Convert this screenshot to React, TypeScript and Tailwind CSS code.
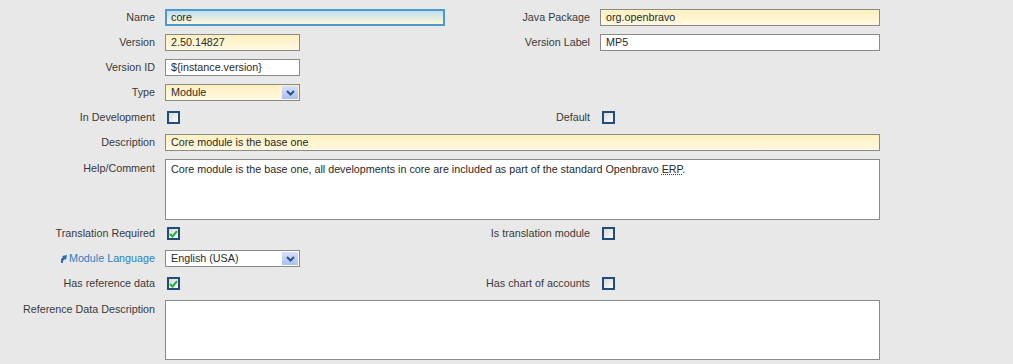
import React from "react";

const font = { fontFamily: '"Liberation Sans", Arial, sans-serif' };

function Label({ children, top = false }: { children: React.ReactNode; top?: boolean }) {
  return (
    <div
      className={
        "flex justify-end text-[10.75px] text-[#3a3a3a] whitespace-nowrap " +
        (top ? "items-start pt-[5px]" : "items-center")
      }
    >
      {children}
    </div>
  );
}

function TextInput({
  value,
  yellow = false,
  width,
}: {
  value: string;
  yellow?: boolean;
  width: string;
}) {
  return (
    <div className="flex items-center">
      <div
        className={
          "h-[17px] border border-[#8a8a8a] flex items-center pl-[5px] text-[10.75px] text-[#2a2a2a] " +
          width +
          (yellow ? " bg-gradient-to-b from-[#fff0bf] to-[#fff9e2]" : " bg-white")
        }
      >
        {value}
      </div>
    </div>
  );
}

function Select({ value, yellow = false }: { value: string; yellow?: boolean }) {
  return (
    <div className="flex items-center">
      <div
        className={
          "relative h-[17px] w-[135px] border border-[#8a8a8a] flex items-center pl-[5px] text-[10.75px] text-[#2a2a2a] " +
          (yellow ? "bg-gradient-to-b from-[#fff0bf] to-[#fff9e2]" : "bg-white")
        }
      >
        {value}
        <div className="absolute right-[1px] top-[1px] h-[13px] w-[16px] bg-gradient-to-b from-[#d6e2fa] to-[#a9c1ef] flex items-center justify-center">
          <svg width="9" height="6" viewBox="0 0 9 6">
            <path d="M1 1 L4.5 4.5 L8 1" stroke="#30508a" strokeWidth="2" fill="none" />
          </svg>
        </div>
      </div>
    </div>
  );
}

function Checkbox({ checked = false }: { checked?: boolean }) {
  return (
    <div className="flex items-center">
      <div className="ml-[2px] h-[13px] w-[13px] border-[2px] border-[#1f4d7c] bg-gradient-to-br from-[#d9d9d9] to-[#fbfbfb] flex items-center justify-center">
        {checked && (
          <svg width="9" height="8" viewBox="0 0 9 8">
            <path d="M1 4 L3.5 6.5 L8 1.2" stroke="#22b032" strokeWidth="2" fill="none" />
          </svg>
        )}
      </div>
    </div>
  );
}

function Empty() {
  return <div />;
}

export default function App() {
  return (
    <div className="w-[1013px] h-[364px] bg-[#e8e8e8] overflow-hidden" style={font}>
      <div className="grid grid-cols-[155px_280px_135px_280px] gap-x-[10px] grid-rows-[25px_25px_25px_25px_25px_25px_66px_25px_25px_25px_64px] pt-[5px]">
        {/* Row 1 */}
        <Label>Name</Label>
        <div className="flex items-center">
          <div className="h-[17px] w-[280px] border-[2px] border-[#4a9ad2] bg-gradient-to-b from-[#bfe0ee] to-[#fff6d6] flex items-center pl-[4px] text-[10.75px] text-[#2a2a2a]">
            core
          </div>
        </div>
        <Label>Java Package</Label>
        <TextInput value="org.openbravo" yellow width="w-[280px]" />

        {/* Row 2 */}
        <Label>Version</Label>
        <TextInput value="2.50.14827" yellow width="w-[135px]" />
        <Label>Version Label</Label>
        <TextInput value="MP5" width="w-[280px]" />

        {/* Row 3 */}
        <Label>Version ID</Label>
        <TextInput value="${instance.version}" width="w-[135px]" />
        <Empty />
        <Empty />

        {/* Row 4 */}
        <Label>Type</Label>
        <Select value="Module" yellow />
        <Empty />
        <Empty />

        {/* Row 5 */}
        <Label>In Development</Label>
        <Checkbox />
        <Label>Default</Label>
        <Checkbox />

        {/* Row 6 */}
        <Label>Description</Label>
        <div className="col-span-3 flex items-center">
          <div className="h-[17px] w-full border border-[#8a8a8a] bg-gradient-to-b from-[#fff0bf] to-[#fff9e2] flex items-center pl-[5px] text-[10.75px] text-[#2a2a2a]">
            Core module is the base one
          </div>
        </div>

        {/* Row 7 */}
        <Label top>Help/Comment</Label>
        <div className="col-span-3 pt-[4px]">
          <div className="h-[61px] w-full border border-[#8a8a8a] bg-white pl-[5px] pt-[2px] text-[10.75px] text-[#2a2a2a] leading-[14px]">
            Core module is the base one, all developments in core are included as part of the standard Openbravo{" "}
            <span className="underline decoration-dotted decoration-[#d01010]">ERP</span>.
          </div>
        </div>

        {/* Row 8 */}
        <Label>Translation Required</Label>
        <Checkbox checked />
        <Label>Is translation module</Label>
        <Checkbox />

        {/* Row 9 */}
        <div className="flex items-center justify-end text-[10.75px] text-[#2e7fc0] whitespace-nowrap">
          <svg width="7" height="8" viewBox="0 0 7 8" className="mr-[2px]">
            <path d="M1 8 L1 4 L3 2 L2 1 L7 0 L6 5 L5 4 L3 6 L3 8 Z" fill="#2e6fa8" />
          </svg>
          Module Language
        </div>
        <Select value="English (USA)" />
        <Empty />
        <Empty />

        {/* Row 10 */}
        <Label>Has reference data</Label>
        <Checkbox checked />
        <Label>Has chart of accounts</Label>
        <Checkbox />

        {/* Row 11 */}
        <Label top>Reference Data Description</Label>
        <div className="col-span-3 pt-[4px]">
          <div className="h-[60px] w-full border border-[#8a8a8a] bg-white" />
        </div>
      </div>
    </div>
  );
}
